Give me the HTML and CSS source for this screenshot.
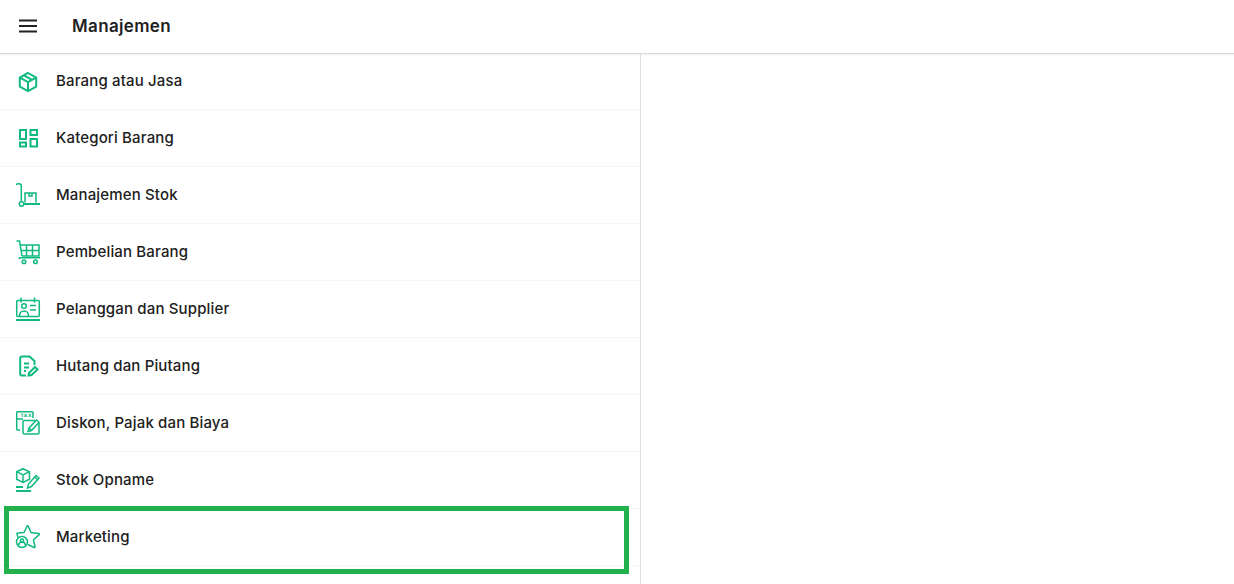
FILE: index.html
```html
<!DOCTYPE html>
<html>
<head>
    <title>Manajemen</title>
    <link rel="stylesheet" href="styles.css">
</head>
<body>
    <header class="topbar">
        <svg class="menu-icon" viewBox="0 0 24 24"><path d="M3 6.500h18M3 12h18M3 17.500h18"/></svg>
        <div class="topbar-title">Manajemen</div>
    </header>
    <div class="content">
        <div class="sidebar">
            <div class="row">
                <svg class="icon" viewBox="0 0 24 24"><path class="thick" d="M12 3l8.200 4.600v9L12 21.200l-8.200-4.600v-9z"/><path class="thick" d="M4 7.600l8 4.600 8-4.600M12 12.200v9M8 5.300l8 4.600"/></svg>
                <span class="label">Barang atau Jasa</span>
            </div>
            <div class="row">
                <svg class="icon" viewBox="0 0 24 24"><path class="thick" d="M4 4h6v9H4zM14.500 4H21v5h-6.500zM14.500 13H21v7.500h-6.500zM4 16.500h6v4H4z"/></svg>
                <span class="label">Kategori Barang</span>
            </div>
            <div class="row">
                <svg class="icon" viewBox="0 0 24 24"><path d="M.7 2V1.500C.7 1 1 .7 1.500.7H3c1.400 0 2.300.9 2.300 2.300V18.800"/><circle cx="5.500" cy="21" r="2.200"/><path class="thick" d="M8 21h16"/><path d="M9 19.500V10h11v9.500M13 10v3h3v-3"/></svg>
                <span class="label">Manajemen Stok</span>
            </div>
            <div class="row">
                <svg class="icon" viewBox="0 0 24 24"><path d="M.5 1h3L6 16M4.500 5H23V16H6M5.500 10.500H23M10.500 5v11M16.500 5v11M3 19c0-.8.500-1.200 1.200-1.200H24"/><circle cx="8" cy="21.800" r="1.800"/><circle cx="19.500" cy="21.800" r="1.800"/></svg>
                <span class="label">Pembelian Barang</span>
            </div>
            <div class="row">
                <svg class="icon" viewBox="0 0 24 24"><rect x=".7" y="3.500" width="22.600" height="16" rx="1"/><path d="M5 .5v5M18.500.5v5M14 8.500h6M14 13h6"/><circle cx="8" cy="9" r="2.300"/><path d="M3.500 19c0-3 2-5 4.500-5s4.500 2 4.500 5"/><path class="thick" d="M0 23h24"/></svg>
                <span class="label">Pelanggan dan Supplier</span>
            </div>
            <div class="row">
                <svg class="icon" viewBox="0 0 24 24"><path class="thick" d="M10 21.500H6c-1 0-1.800-.8-1.800-1.800V4.300c0-1 .8-1.800 1.800-1.800h7.500L18.500 7v4"/><path class="thick" d="M8 9.500h5M8 13.500h5M8 17h2M12.500 21.500l.5-2.500 6-6 2.500 2.500-6 5.500z"/></svg>
                <span class="label">Hutang dan Piutang</span>
            </div>
            <div class="row">
                <svg class="icon" viewBox="0 0 24 24"><path d="M4 19H1.500C.8 19 .7 18.500.7 18V1.500C.7 1 .8.700 1.500.7H16c.7 0 1 .3 1 .8V7M.7 8H7"/><text class="tax" x="4.500" y="6">TAX</text><path d="M7 21.500V10.500c0-.7.500-1 1-1h11M23 12v10c0 .7-.4 1-1 1H8.500c-.8 0-1.500-.6-1.500-1.500"/><path d="M12 20.500l1-3.500 7.500-8 2.500 2.500-7.500 8zM13 17l2.500 2.500"/></svg>
                <span class="label">Diskon, Pajak dan Biaya</span>
            </div>
            <div class="row">
                <svg class="icon" viewBox="0 0 24 24"><path d="M7 .7l6.500 3v7.500L7 14.500.7 11.200V3.700zM.7 3.700L7 7l6.500-3.300M7 7v7.500"/><path d="M11.500 20l1-4L20 7.500l3 2.500-7.500 8.500zM18.500 9l3 2.500"/><path class="thick" d="M0 19h7M0 23h15"/></svg>
                <span class="label">Stok Opname</span>
            </div>
            <div class="row">
                <svg class="icon" viewBox="0 0 24 24"><path d="M2 12.500L1 9c-.2-.6.200-1 .7-1L8 7.500 11 1.200c.3-.6.900-.6 1.200 0L15 7.500l7.800 1c.6 0 .8.700.4 1.100L17.500 14.800l1.500 7c.1.600-.4 1-1 .7L12 19.500"/><circle cx="6" cy="17" r="5.500"/><circle cx="6" cy="15.500" r="1.600"/><path d="M2.800 20c0-2 1.400-3 3.200-3s3.200 1 3.200 3"/></svg>
                <span class="label">Marketing</span>
            </div>
            <div class="highlight"></div>
        </div>
    </div>
</body>
</html>
```

FILE: styles.css
```css
body {
    margin: 0;
    padding: 0;
    width: 1234px;
    height: 584px;
    background: #fff;
    font-family: Inter, "Noto Sans", sans-serif;
    color: #212121;
    overflow: hidden;
}
.topbar {
    height: 53px;
    display: flex;
    align-items: center;
    border-bottom: 1px solid #dcdcdc;
    box-shadow: 0 1px 1px rgba(0, 0, 0, 0.06);
}
.menu-icon {
    width: 24px;
    height: 24px;
    margin-left: 16px;
    margin-top: -1px;
    fill: none;
    stroke: #212121;
    stroke-width: 2;
}
.topbar-title {
    margin-left: 32px;
    margin-bottom: 2px;
    font-size: 17px;
    font-weight: 600;
    letter-spacing: 0.35px;
}
.sidebar {
    position: relative;
    width: 640px;
    height: 530px;
    border-right: 1px solid #e0e0e0;
}
.row {
    height: 56px;
    display: flex;
    align-items: center;
    padding-left: 16px;
    border-bottom: 1px solid #f6f6f6;
}
.row:first-child {
    height: 55px;
}
.icon {
    width: 24px;
    height: 24px;
    flex-shrink: 0;
    fill: none;
    stroke: #10b981;
    stroke-width: 1.500;
    overflow: visible;
}
.icon .thick {
    stroke-width: 2;
}
.icon .tax {
    font-family: "DejaVu Sans", sans-serif;
    font-size: 4.500px;
    font-weight: 700;
    letter-spacing: 0.6px;
    fill: #10b981;
    stroke: none;
}
.label {
    margin-left: 16px;
    margin-bottom: 2px;
    font-size: 15px;
    font-weight: 500;
    letter-spacing: 0.15px;
}
.highlight {
    position: absolute;
    left: 4px;
    top: 452px;
    width: 615px;
    height: 58px;
    border: 5px solid #22b14c;
}
```
